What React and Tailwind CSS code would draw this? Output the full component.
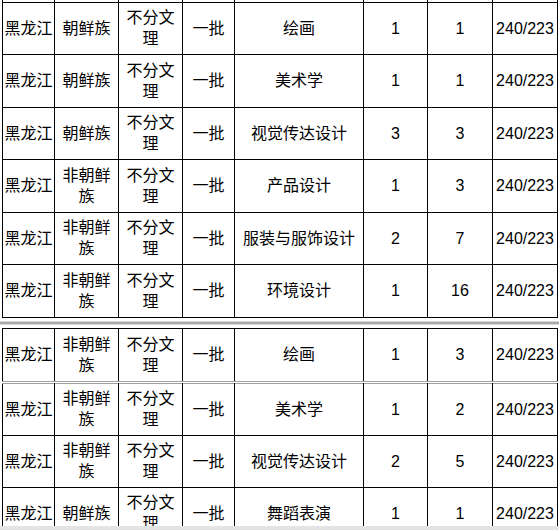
const FONT = { fontFamily: '"Liberation Sans", "Noto Sans CJK SC", sans-serif' };

const widths = ['w-[52px]', 'w-[64px]', 'w-[64px]', 'w-[52px]', 'w-[129px]', 'w-[64px]', 'w-[65px]', 'w-[65px]'];

const first = [
  ['朝鲜族', '绘画', '1', '1'],
  ['朝鲜族', '美术学', '1', '1'],
  ['朝鲜族', '视觉传达设计', '3', '3'],
  ['非朝鲜族', '产品设计', '1', '3'],
  ['非朝鲜族', '服装与服饰设计', '2', '7'],
  ['非朝鲜族', '环境设计', '1', '16'],
];
const second = [['非朝鲜族', '绘画', '1', '3']];
const third = [
  ['非朝鲜族', '美术学', '1', '2'],
  ['非朝鲜族', '视觉传达设计', '2', '5'],
  ['朝鲜族', '舞蹈表演', '1', '1'],
];

function Cols() {
  return (
    <colgroup>
      {widths.map((w, i) => <col key={i} className={w} />)}
    </colgroup>
  );
}

function Row({ r, h, edge }) {
  const cells = ['黑龙江', r[0], '不分文理', '一批', r[1], r[2], r[3], '240/223'];
  return (
    <tr className={h}>
      {cells.map((c, i) => (
        <td key={i} className={`border border-black ${edge} px-px text-center align-middle leading-[21px] text-[16px] text-black`}>
          {c}
        </td>
      ))}
    </tr>
  );
}

function Table({ rows, stub, h, grayTop, grayBottom }) {
  return (
    <table className="table-fixed border-collapse w-[555px]">
      <Cols />
      <tbody>
        {stub && (
          <tr className="h-[2px]">
            {widths.map((_, i) => <td key={i} className="border-x border-black p-0" />)}
          </tr>
        )}
        {rows.map((r, i) => {
          let edge = '';
          if (i === 0 && grayTop) edge += ' border-t-[#a0a0a0]';
          if (i === rows.length - 1 && grayBottom) edge += ' border-b-[#a0a0a0]';
          return <Row key={i} r={r} h={h} edge={edge} />;
        })}
      </tbody>
    </table>
  );
}

export default function App() {
  return (
    <div className="relative w-[559px] h-[530px] overflow-hidden bg-white" style={FONT}>
      <div className="pl-[2px]">
        <Table rows={first} stub h="h-[52.5px]" />
      </div>
      <div className="h-[10px] flex flex-col justify-center">
        <div className="h-[1px] bg-[#d8d8d8]" />
        <div className="h-[2px] bg-[#a8a8a8]" />
        <div className="h-[1px] bg-[#d8d8d8]" />
      </div>
      <div className="pl-[2px]">
        <Table rows={second} h="h-[53px]" grayBottom />
      </div>
      <div className="h-px bg-white" />
      <div className="pl-[2px]">
        <Table rows={third} h="h-[52px]" grayTop />
      </div>
      <div className="absolute left-0 right-0 bottom-0 h-[4px] bg-[#e4e4e4]" />
    </div>
  );
}
